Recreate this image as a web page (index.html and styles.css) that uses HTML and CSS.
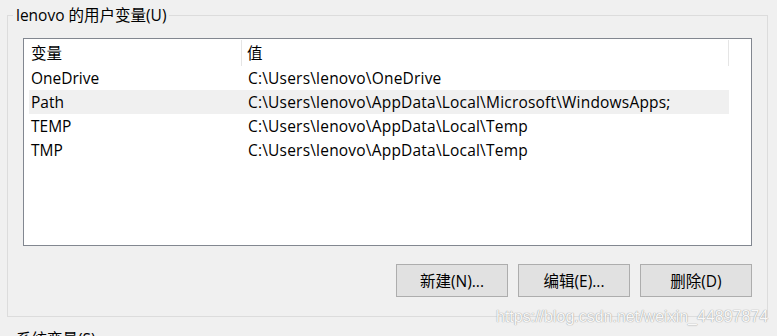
FILE: index.html
```html
<!DOCTYPE html>
<html lang="zh-CN">
<head>
<meta charset="utf-8">
<title>环境变量</title>
<link rel="stylesheet" href="styles.css">
</head>
<body>
<fieldset class="group">
  <legend class="group-title">lenovo 的用户变量(U)</legend>
  <div class="listview">
    <div class="lv-inner">
      <div class="lv-header">
        <div class="col col-name">变量</div>
        <div class="col col-value">值</div>
        <div class="col col-rest"></div>
      </div>
      <div class="lv-row">
        <div class="col col-name">OneDrive</div>
        <div class="col col-value">C:\Users\lenovo\OneDrive</div>
      </div>
      <div class="lv-row selected">
        <div class="col col-name">Path</div>
        <div class="col col-value">C:\Users\lenovo\AppData\Local\Microsoft\WindowsApps;</div>
      </div>
      <div class="lv-row">
        <div class="col col-name">TEMP</div>
        <div class="col col-value">C:\Users\lenovo\AppData\Local\Temp</div>
      </div>
      <div class="lv-row">
        <div class="col col-name">TMP</div>
        <div class="col col-value">C:\Users\lenovo\AppData\Local\Temp</div>
      </div>
    </div>
  </div>
  <div class="buttons">
    <button class="btn">新建(N)...</button>
    <button class="btn">编辑(E)...</button>
    <button class="btn">删除(D)</button>
  </div>
</fieldset>
<fieldset class="group group-next">
  <legend class="group-title">系统变量(S)</legend>
</fieldset>
<div class="watermark">https://blog.csdn.net/weixin_44897874</div>
</body>
</html>
```

FILE: styles.css
```css
html, body {
  margin: 0;
  padding: 0;
  background: #f0f0f0;
  overflow: hidden;
  height: 336px;
}
body {
  position: relative;
  font-family: "Open Sans", "Noto Sans CJK SC", sans-serif;
  font-size: 15.5px;
  color: #000;
}
.group {
  margin: 5px 9px 0 7px;
  padding: 0 0 19px 0;
  border: 1px solid #dcdcdc;
  min-width: 0;
}
.group-title {
  margin-left: 5px;
  padding: 0 3px;
  line-height: 20px;
  height: 20px;
}
.listview {
  margin: 13px 0 0 15px;
  width: 727px;
  height: 206px;
  border: 1px solid #828790;
  background: #fff;
}
.lv-inner {
  margin-left: 5px;
  width: 700px;
}
.lv-header, .lv-row {
  display: flex;
  align-items: center;
}
.lv-header {
  height: 27px;
}
.lv-row {
  height: 24px;
}
.lv-row.selected {
  background: #f0f0f0;
}
.col {
  white-space: nowrap;
  line-height: 20px;
}
.col-name {
  width: 213px;
  padding-left: 2px;
  box-sizing: border-box;
}
.col-value {
  flex: 1;
  padding-left: 6px;
}
.lv-row .col-value {
  letter-spacing: 0.2px;
}
.lv-header .col {
  align-self: stretch;
  display: flex;
  align-items: center;
}
.lv-header .col-name,
.lv-header .col-value {
  border-right: 1px solid #e5e5e5;
  margin: 1px 0 0 0;
}
.lv-header .col-value {
  padding-left: 5px;
}
.lv-header .col-rest {
  width: 0;
}
.buttons {
  display: flex;
  justify-content: flex-end;
  gap: 10px;
  margin: 18px 0 0 15px;
  width: 729px;
}
.btn {
  width: 112px;
  height: 33px;
  background: #e1e1e1;
  border: 1px solid #adadad;
  font-family: "Open Sans", "Noto Sans CJK SC", sans-serif;
  font-size: 15.5px;
  color: #000;
  padding: 0;
}
.group-next {
  margin-top: 12px;
  height: 40px;
}
.watermark {
  position: absolute;
  left: 496px;
  top: 308px;
  font-family: "Liberation Sans", Arial, sans-serif;
  font-size: 16px;
  color: #f8f8f8;
  text-shadow: 0 0 1px #9a9a9a, 0 0 1px #b0b0b0;
  white-space: nowrap;
}
```
